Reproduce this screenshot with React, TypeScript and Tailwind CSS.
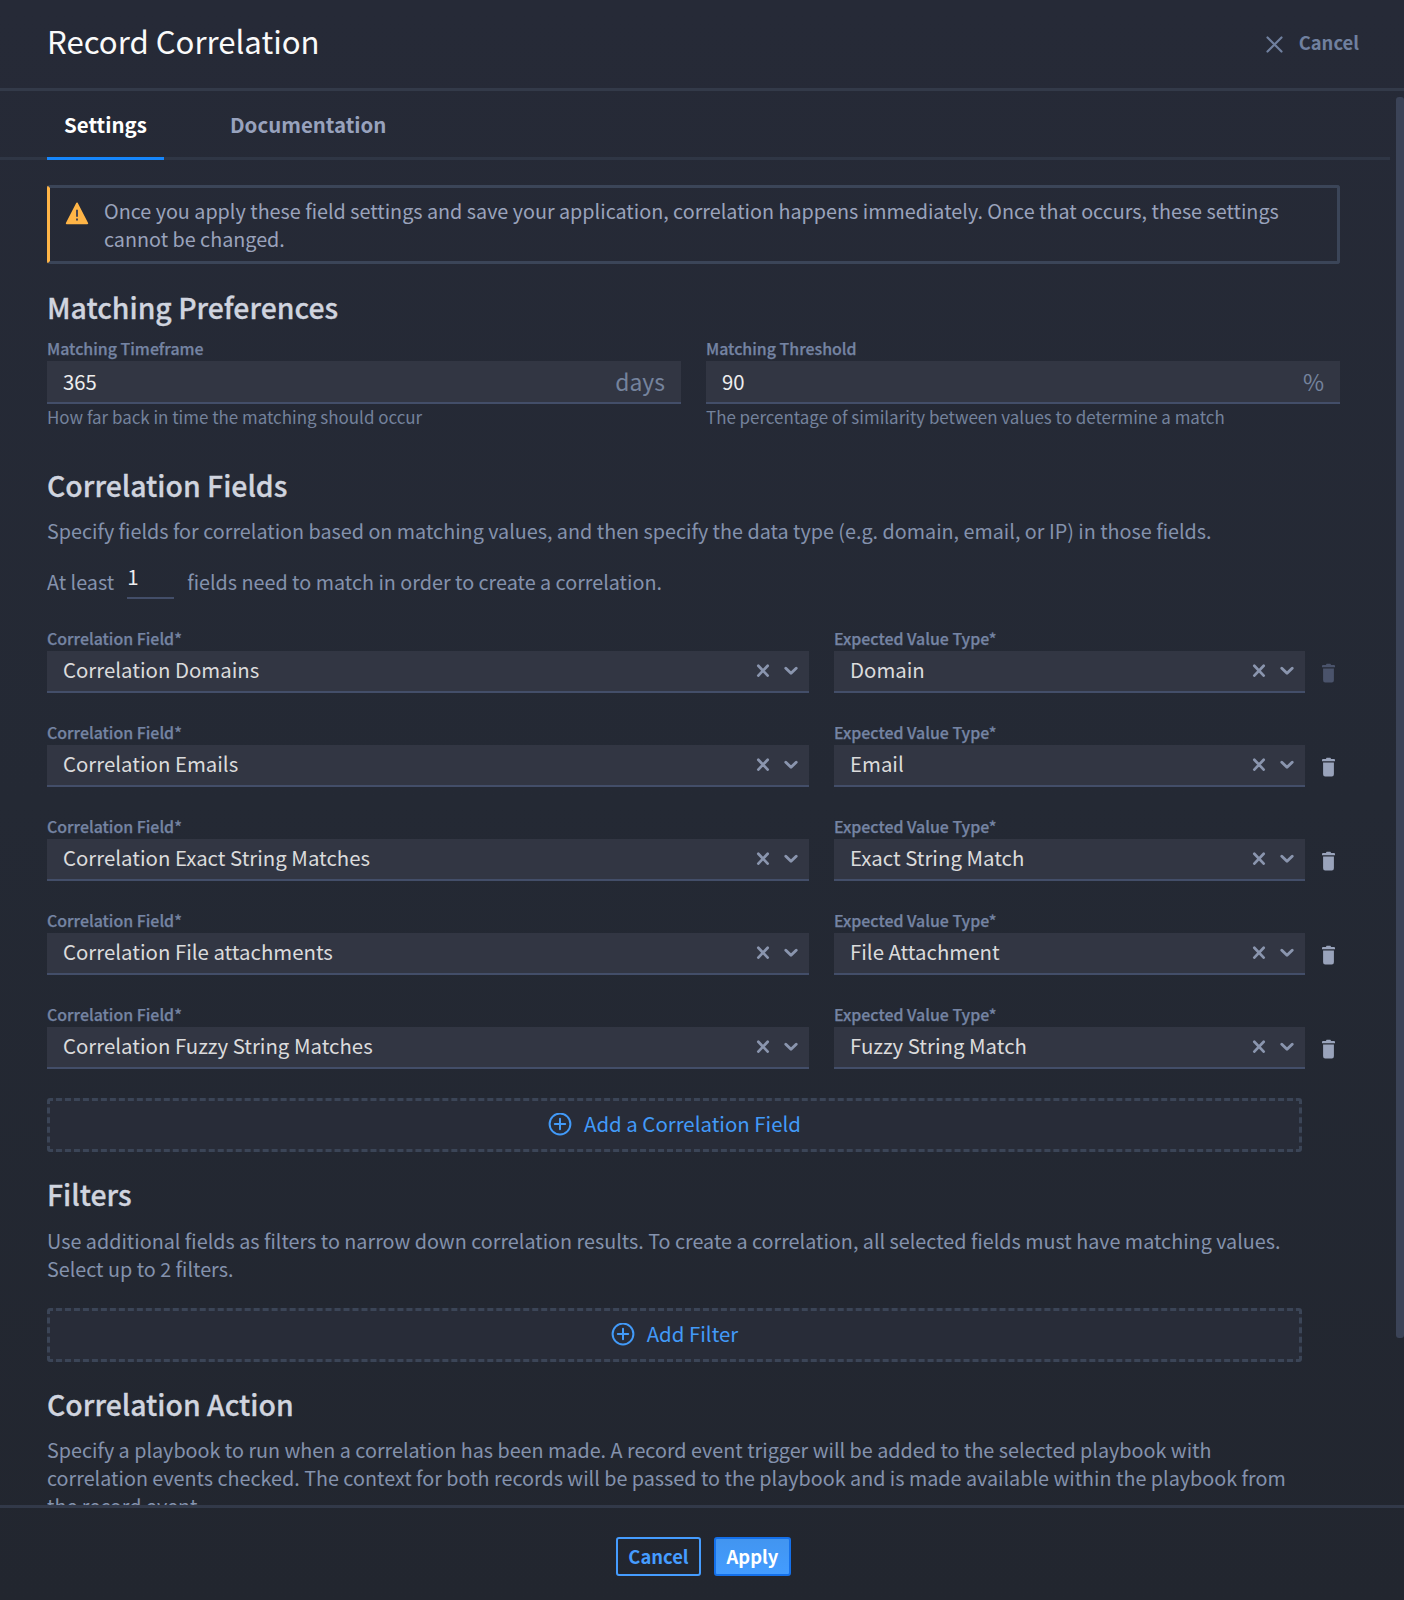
import React from "react";

const rows = [
  { field: "Correlation Domains", type: "Domain", locked: true },
  { field: "Correlation Emails", type: "Email", locked: false },
  { field: "Correlation Exact String Matches", type: "Exact String Match", locked: false },
  { field: "Correlation File attachments", type: "File Attachment", locked: false },
  { field: "Correlation Fuzzy String Matches", type: "Fuzzy String Match", locked: false },
];

function Heading({ children, className }: { children: React.ReactNode; className: string }) {
  return (
    <h2 className={`text-[28.4px] leading-[37px] font-medium text-[#d0d4df] [-webkit-text-stroke:0.3px_#d0d4df] ${className}`}>
      {children}
    </h2>
  );
}

function Body({ children, className }: { children: React.ReactNode; className: string }) {
  return (
    <p className={`text-[19.76px] leading-7 whitespace-nowrap text-[#8492ad] ${className}`}>{children}</p>
  );
}

function Label({ children }: { children: React.ReactNode }) {
  return (
    <div className="mb-[2px] pt-px text-[15.93px] leading-5 font-medium text-[#7584a3] [-webkit-text-stroke:0.25px_#7584a3]">
      {children}
    </div>
  );
}

function NumberField({ label, value, unit, hint }: { label: string; value: string; unit: string; hint: string }) {
  return (
    <div className="min-w-0 flex-1">
      <Label>{label}</Label>
      <div className="flex h-[43px] items-center justify-between border-b-2 border-[#434e69] bg-[#323643] px-4">
        <span className="text-[20.3px] leading-[41px] text-[#ededee]">{value}</span>
        <span className="text-[22.9px] leading-[39px] text-[#75839d]">{unit}</span>
      </div>
      <div className="mt-px text-[16.94px] leading-6 whitespace-nowrap text-[#74829c]">{hint}</div>
    </div>
  );
}

function SelectField({ label, value, className }: { label: string; value: string; className: string }) {
  return (
    <div className={className}>
      <Label>{label}</Label>
      <div className="flex h-[42px] items-center border-b-2 border-[#434e69] bg-[#323643] pr-[11px] pl-4">
        <span className="flex-1 pb-[3px] text-[20.4px] leading-[37px] whitespace-nowrap text-[#dbdbdc]">{value}</span>
        <svg className="mr-[14px] size-[14px]" viewBox="0 0 14 14" fill="none" stroke="#8a95ae" strokeWidth="2.7" strokeLinecap="round">
          <path d="M2.3 1.8l9.4 9.8M11.7 1.8l-9.4 9.8" />
        </svg>
        <svg className="h-[14px] w-[14px]" viewBox="0 0 14 14" fill="none" stroke="#8a95ae" strokeWidth="2.9" strokeLinecap="round" strokeLinejoin="round">
          <path d="M1.8 4.3L7 9.3l5.2-5" />
        </svg>
      </div>
    </div>
  );
}

function TrashIcon({ locked }: { locked: boolean }) {
  return (
    <svg
      className={`mt-[35px] ml-[17px] h-5 w-[13px] ${locked ? "text-[#4a536b]" : "text-[#99a3bb]"}`}
      viewBox="0 0 13 20"
      fill="currentColor"
    >
      <path d="M0 4.2V2.9Q0 2 1 2h2.9L4.6.8h3.8L9.1 2H12q1 0 1 .9v1.3z" />
      <path d="M1.1 5.6h10.8v11.6q0 2.2-2.1 2.2H3.2q-2.1 0-2.1-2.2z" />
    </svg>
  );
}

function AddButton({ children, className }: { children: React.ReactNode; className: string }) {
  return (
    <button
      className={`flex h-[54px] w-[1255px] items-center justify-center gap-3 rounded-[3px] border-3 border-dashed border-[#3b4557] bg-[#282c38] text-[#429af8] ${className}`}
    >
      <svg className="size-6" viewBox="0 0 24 24" fill="none" stroke="currentColor" strokeWidth="2" strokeLinecap="round">
        <circle cx="12" cy="11" r="10.4" />
        <path d="M12 5.8v10.4M6.8 11h10.4" />
      </svg>
      <span className="pb-1 text-[20.42px] leading-[44px]">{children}</span>
    </button>
  );
}

export default function App() {
  return (
    <div className="flex h-[1600px] w-[1404px] flex-col overflow-hidden bg-linear-to-b from-[#262a37] via-[#242934] to-[#22262f] font-['Noto_Sans_CJK_SC',sans-serif]">
      <header className="flex h-[91px] shrink-0 items-start justify-between border-b-3 border-[#333a49] pr-[45px] pl-[47px]">
        <h1 className="mt-[21px] text-[31.15px] leading-10 text-[#fafafa]">Record Correlation</h1>
        <button className="mt-[22px] flex items-center text-[18.4px] leading-10 font-bold text-[#70809f]">
          <svg className="mt-[5px] mr-4 size-[17px]" viewBox="0 0 17 17" fill="none" stroke="currentColor" strokeWidth="2.2" strokeLinecap="round">
            <path d="M1.5 1.5l14 14M15.5 1.5l-14 14" />
          </svg>
          Cancel
        </button>
      </header>

      <main className="flex min-h-0 flex-1 overflow-hidden">
        <div className="w-[1390px] shrink-0">
          <nav className="flex h-[69px] items-start border-b-3 border-[#2f3645] pl-[47px] text-[20.45px] leading-[66px] font-bold">
            <button className="h-[69px] w-[117px] shrink-0 border-b-3 border-[#1686fb] text-white">Settings</button>
            <button className="ml-[49px] px-[17px] text-[#98a2bd]">Documentation</button>
          </nav>

          <div className="w-[1340px] pl-[47px]">
            <div className="mt-[25px] flex h-[79px] rounded-[3px] border-[3px] border-[#3b4558] border-l-[#ffb547] pt-[9px] pl-[15px]">
              <svg className="mt-1 mr-[15px] size-6" viewBox="0 0 24 24">
                <path d="M12 2.4L22.3 22.3H1.7z" fill="#ffb547" stroke="#ffb547" strokeWidth="1.8" strokeLinejoin="round" />
                <path d="M11 8.7h2v7h-2zM11 17.5h2v2h-2z" fill="#4a4650" />
              </svg>
              <p className="text-[19.76px] leading-[28.33px] whitespace-nowrap text-[#9aa3bc]">
                Once you apply these field settings and save your application, correlation happens immediately. Once that occurs, these settings
                <br />
                cannot be changed.
              </p>
            </div>

            <Heading className="mt-6">Matching Preferences</Heading>
            <div className="mt-[13px] flex gap-[25px]">
              <NumberField label="Matching Timeframe" value="365" unit="days" hint="How far back in time the matching should occur" />
              <NumberField label="Matching Threshold" value="90" unit="%" hint="The percentage of similarity between values to determine a match" />
            </div>

            <Heading className="mt-[37px]">Correlation Fields</Heading>
            <Body className="mt-[14px]">
              Specify fields for correlation based on matching values, and then specify the data type (e.g. domain, email, or IP) in those fields.
            </Body>
            <div className="mt-[23px] flex h-[31px] items-start text-[19.76px] leading-[28.33px] whitespace-nowrap text-[#8492ad]">
              <span>At least</span>
              <span className="-mt-[6px] ml-[13px] h-[37px] w-[47px] border-b-2 border-[#434e69] text-[20.5px] leading-[29px] text-[#ededee]">1</span>
              <span className="ml-[13px]">fields need to match in order to create a correlation.</span>
            </div>

            <div className="mt-[29px] flex flex-col gap-[29px]">
              {rows.map((row) => (
                <div key={row.field} className="flex h-[65px]">
                  <SelectField label="Correlation Field*" value={row.field} className="w-[762px]" />
                  <SelectField label="Expected Value Type*" value={row.type} className="ml-[25px] w-[471px]" />
                  <TrashIcon locked={row.locked} />
                </div>
              ))}
            </div>
            <AddButton className="mt-[29px]">Add a Correlation Field</AddButton>

            <Heading className="mt-[23px]">Filters</Heading>
            <Body className="mt-[15px]">
              Use additional fields as filters to narrow down correlation results. To create a correlation, all selected fields must have matching values.
              <br />
              Select up to 2 filters.
            </Body>
            <AddButton className="mt-[25px]">Add Filter</AddButton>

            <Heading className="mt-[23px]">Correlation Action</Heading>
            <Body className="mt-[14px]">
              Specify a playbook to run when a correlation has been made. A record event trigger will be added to the selected playbook with
              <br />
              correlation events checked. The context for both records will be passed to the playbook and is made available within the playbook from
              <br />
              the record event.
            </Body>
          </div>
        </div>
        <div className="mt-[6px] ml-[6px] h-[1241px] w-2 shrink-0 rounded-[3px] bg-[#3b4357]" />
      </main>

      <footer className="flex h-[95px] shrink-0 items-start justify-center gap-[13px] border-t-3 border-[#323949] pt-[29px] pl-[3px] text-[18.4px] leading-[35px] font-bold">
        <button className="h-[39px] w-[85px] rounded-[3px] border-2 border-[#459cff] text-[#459cff]">Cancel</button>
        <button className="h-[39px] w-[77px] rounded-[3px] border-2 border-[#1470ea] bg-linear-to-b from-[#4295f0] to-[#439cff] text-white">Apply</button>
      </footer>
    </div>
  );
}
